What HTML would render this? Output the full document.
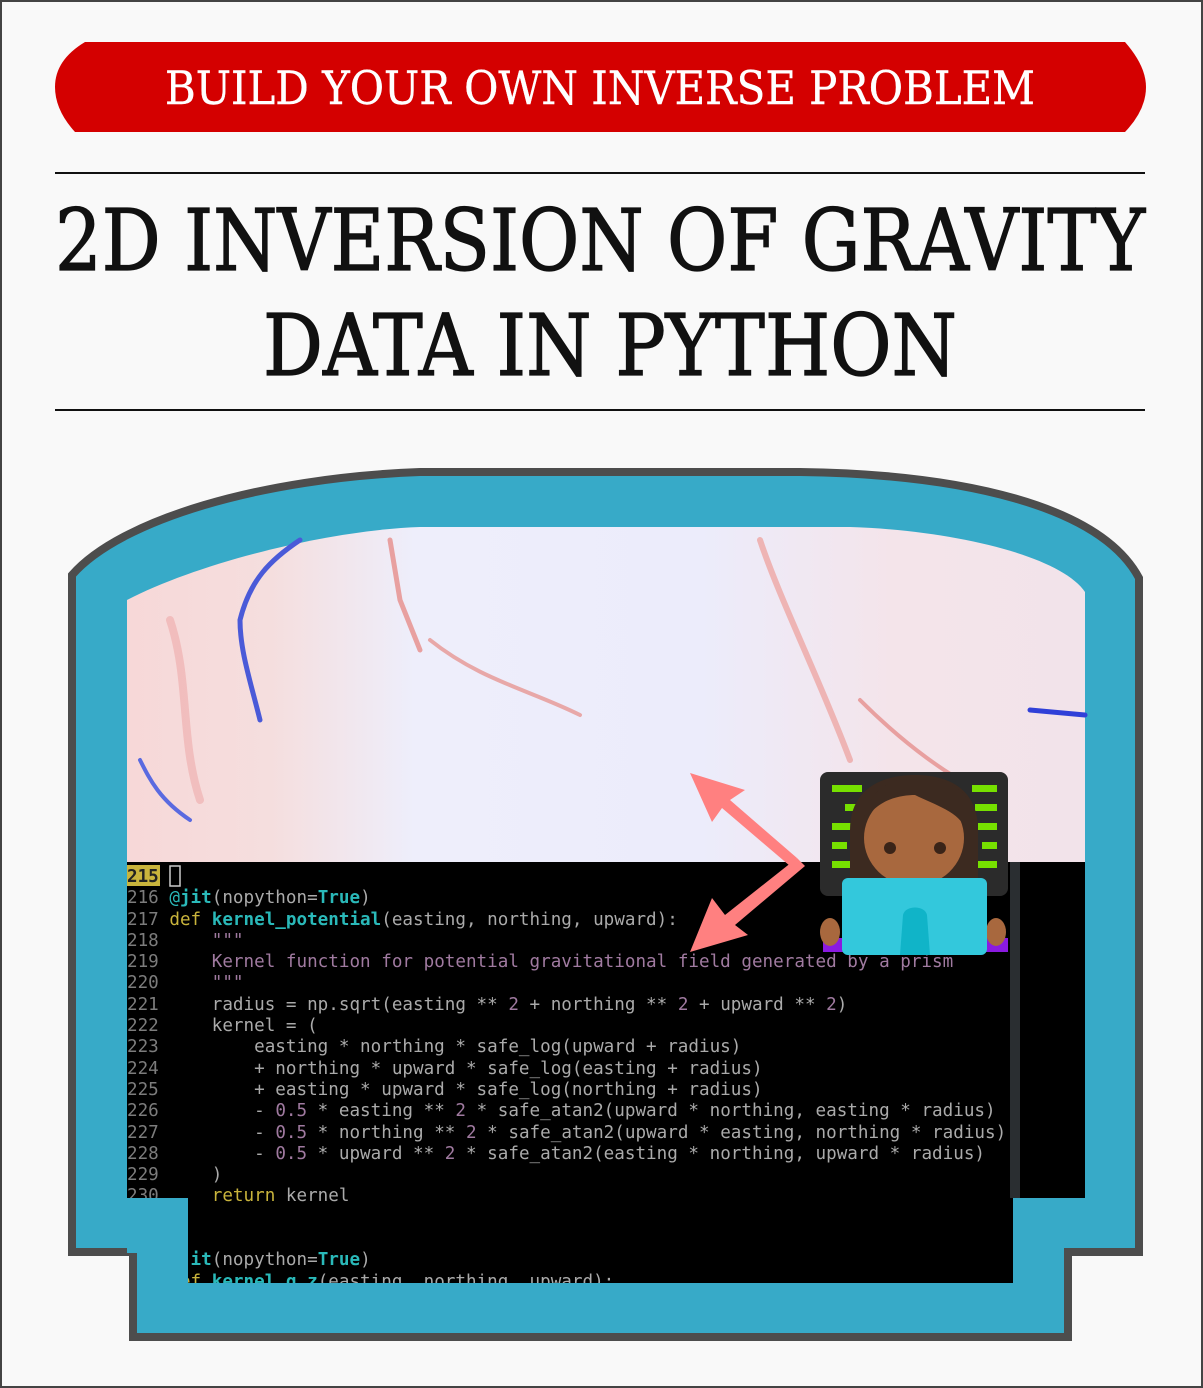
<!DOCTYPE html>
<html><head><meta charset="utf-8"><style>
html,body{margin:0;padding:0}
body{width:1203px;height:1388px;position:relative;background:#f9f9f9;overflow:hidden}
.frame{position:absolute;left:0;top:0;width:1199px;height:1384px;border:2px solid #444}
.rule{position:absolute;left:55px;width:1090px;height:2px;background:#111}
.code{position:absolute;left:127px;top:867px;font-family:"DejaVu Sans Mono","Liberation Mono",monospace;font-size:17.6px;line-height:21.3px;color:#aaa;white-space:pre}
.n{color:#7c7c7c}.k{color:#c9b43c}.f{color:#2ab9b9;font-weight:bold}.d{color:#a07aa0}.c{color:#2ab9b9}.p{color:#a07aa0}
</style></head><body>
<div class="frame"></div>
<svg style="position:absolute;left:0;top:0" width="1203" height="1388">
<path d="M85,42 L1125,42 Q1146,66 1146,87 Q1146,110 1125,132 L75,132 Q55,110 55,87 Q55,60 85,42 Z" fill="#d40000"/>
<text x="165" y="104" textLength="870" lengthAdjust="spacingAndGlyphs" font-family="DejaVu Serif, Liberation Serif, serif" font-size="46" fill="#fff" stroke="#fff" stroke-width="0.4">BUILD YOUR OWN INVERSE PROBLEM</text>
<text x="55" y="270" textLength="1090" lengthAdjust="spacingAndGlyphs" font-family="DejaVu Serif, Liberation Serif, serif" font-size="85" fill="#111" stroke="#111" stroke-width="1.3">2D INVERSION OF GRAVITY</text>
<text x="263" y="375" textLength="694" lengthAdjust="spacingAndGlyphs" font-family="DejaVu Serif, Liberation Serif, serif" font-size="85" fill="#111" stroke="#111" stroke-width="1.3">DATA IN PYTHON</text>
<path d="M72,575 C120,520 260,478 420,472 L800,472 C960,474 1100,505 1139,578 L1139,1252 L1068,1252 L1068,1337 L133,1337 L133,1252 L72,1252 Z" fill="#37aac8" stroke="#4d4d4d" stroke-width="8"/>
<defs>
<linearGradient id="g" x1="0" x2="1" y1="0" y2="0">
<stop offset="0" stop-color="#f7d8d8"/><stop offset="0.15" stop-color="#f5dede"/><stop offset="0.3" stop-color="#eeeefb"/><stop offset="0.6" stop-color="#ececfb"/><stop offset="0.8" stop-color="#f4e4ea"/><stop offset="1" stop-color="#f2e3ea"/>
</linearGradient>
</defs>
<path d="M127,600 C200,562 330,530 420,527 L850,527 C950,530 1060,555 1085,592 L1085,862 L127,862 Z" fill="url(#g)"/>
<g fill="none" stroke-linecap="round">
<path d="M300,540 C270,560 250,580 240,620 C240,650 250,680 260,720" stroke="#4a5ad8" stroke-width="5"/>
<path d="M140,760 C150,780 160,800 190,820" stroke="#5a6ae0" stroke-width="4"/>
<path d="M390,540 L400,600 L420,650" stroke="#e8a0a0" stroke-width="5"/>
<path d="M430,640 C480,680 530,690 580,715" stroke="#e8a8a8" stroke-width="4"/>
<path d="M1030,710 L1085,715" stroke="#3040d8" stroke-width="5"/>
<path d="M760,540 C780,600 820,680 850,760" stroke="#eeb4b4" stroke-width="6"/>
<path d="M860,700 C900,740 950,780 1000,800" stroke="#e8a0a0" stroke-width="4"/>
<path d="M170,620 C190,680 180,740 200,800" stroke="#eaa" stroke-width="8" opacity=".6"/>
</g>
<rect x="127" y="862" width="958" height="336" fill="#000"/>
<rect x="188" y="1197" width="825" height="86" fill="#000"/>
<rect x="1010" y="862" width="10" height="336" fill="#2a2e31"/>
<rect x="127" y="865" width="33" height="21" fill="#c9b43c"/>
<rect x="170" y="866" width="10" height="20" fill="none" stroke="#ccc" stroke-width="1.5"/>
</svg>
<div class="rule" style="top:172px"></div>
<div class="rule" style="top:409px"></div>
<div class="code"><span style="color:#222;font-weight:bold">215</span>
<span class="n">216</span> <span class="c">@</span><span class="f">jit</span>(nopython=<span class="f">True</span>)
<span class="n">217</span> <span class="k">def</span> <span class="f">kernel_potential</span>(easting, northing, upward):
<span class="n">218</span>     <span class="d">"""</span>
<span class="n">219</span>     <span class="d">Kernel function for potential gravitational field generated by a prism</span>
<span class="n">220</span>     <span class="d">"""</span>
<span class="n">221</span>     radius = np.sqrt(easting ** <span class="p">2</span> + northing ** <span class="p">2</span> + upward ** <span class="p">2</span>)
<span class="n">222</span>     kernel = (
<span class="n">223</span>         easting * northing * safe_log(upward + radius)
<span class="n">224</span>         + northing * upward * safe_log(easting + radius)
<span class="n">225</span>         + easting * upward * safe_log(northing + radius)
<span class="n">226</span>         - <span class="p">0.5</span> * easting ** <span class="p">2</span> * safe_atan2(upward * northing, easting * radius)
<span class="n">227</span>         - <span class="p">0.5</span> * northing ** <span class="p">2</span> * safe_atan2(upward * easting, northing * radius)
<span class="n">228</span>         - <span class="p">0.5</span> * upward ** <span class="p">2</span> * safe_atan2(easting * northing, upward * radius)
<span class="n">229</span>     )
<span class="n">230</span>     <span class="k">return</span> kernel


<span class="n">   </span> <span class="c">@</span><span class="f">jit</span>(nopython=<span class="f">True</span>)
<span class="n">   </span> <span class="k">def</span> <span class="f">kernel_g_z</span>(easting, northing, upward):</div>
<svg style="position:absolute;left:0;top:0" width="1203" height="1388">
<rect x="127" y="1198" width="61" height="55" fill="#37aac8"/>
<rect x="137" y="1253" width="51" height="30" fill="#37aac8"/>
<rect x="137" y="1283" width="927" height="50" fill="#37aac8"/>
<g fill="#ff8080">
<path d="M690,773 L745,790 L730,800 L797,858 L790,866 L722,808 L712,822 Z"/>
<path d="M797,858 L805,866 L735,925 L748,935 L690,952 L712,898 L725,915 Z"/>
</g>
<rect x="820" y="772" width="188" height="124" rx="8" fill="#2b2b2b"/>
<g fill="#76e000">
<rect x="832" y="785" width="30" height="7"/><rect x="972" y="785" width="25" height="7"/>
<rect x="845" y="804" width="20" height="7"/><rect x="975" y="804" width="22" height="7"/>
<rect x="832" y="823" width="25" height="7"/><rect x="978" y="823" width="19" height="7"/>
<rect x="832" y="842" width="15" height="7"/><rect x="982" y="842" width="15" height="7"/>
<rect x="832" y="861" width="25" height="7"/><rect x="975" y="861" width="22" height="7"/>
</g>
<path d="M850,880 L850,830 C850,790 880,775 915,775 C950,775 978,790 978,830 L978,880 Z" fill="#3c2a20"/>
<ellipse cx="914" cy="838" rx="50" ry="48" fill="#a8683e"/>
<path d="M862,830 C870,800 900,795 915,795 C935,805 960,812 966,830 L968,800 C960,785 940,778 915,778 C885,778 865,795 862,830 Z" fill="#3c2a20"/>
<circle cx="890" cy="848" r="6" fill="#3a2418"/><circle cx="940" cy="848" r="6" fill="#3a2418"/>
<rect x="823" y="938" width="185" height="14" fill="#8a1ae0"/>
<ellipse cx="830" cy="932" rx="10" ry="14" fill="#a8683e"/><ellipse cx="996" cy="932" rx="10" ry="14" fill="#a8683e"/>
<rect x="842" y="878" width="145" height="77" rx="6" fill="#33c8dc"/>
<path d="M900,955 L903,915 C905,905 925,905 927,915 L930,955 Z" fill="#10b4c8"/>
</svg>
</body></html>
